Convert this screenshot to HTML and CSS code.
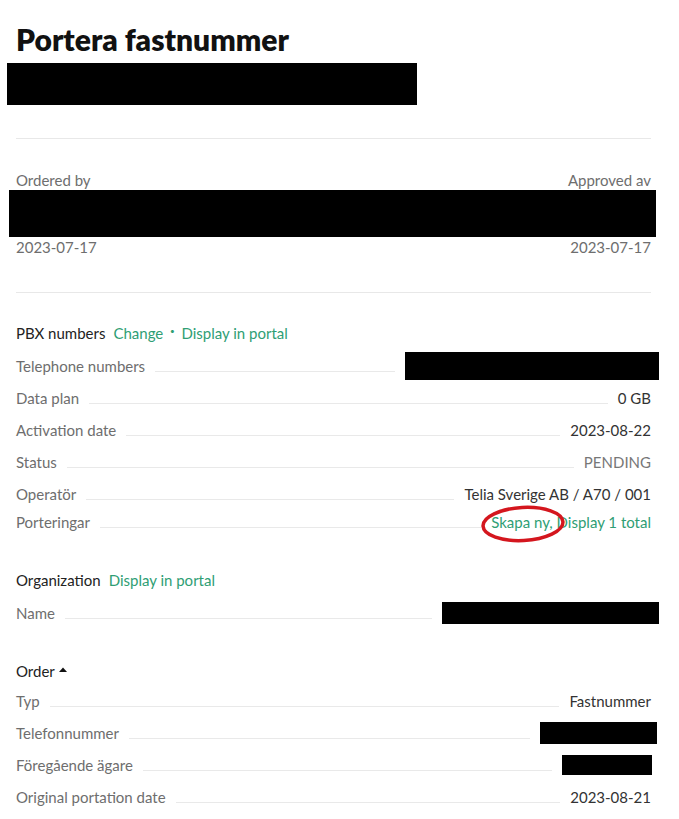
FILE: index.html
```html
<!DOCTYPE html>
<html lang="sv">
<head>
<meta charset="utf-8">
<title>Portera fastnummer</title>
<link rel="stylesheet" href="styles.css">
</head>
<body>
<div class="page">
  <h1 class="title">Portera fastnummer</h1>
  <div class="redact redact-sub"></div>
  <hr class="sep">
  <div class="meta">
    <div class="meta-row"><span>Ordered by</span><span>Approved av</span></div>
    <div class="redact redact-people"></div>
    <div class="meta-row"><span>2023-07-17</span><span>2023-07-17</span></div>
  </div>
  <hr class="sep">

  <section class="group group-pbx">
    <div class="group-head">PBX numbers <span class="links"><a class="link" href="#">Change</a><span class="dot">·</span><a class="link" href="#">Display in portal</a></span></div>
    <div class="row"><span class="label">Telephone numbers</span><span class="leader"></span><span class="value"><span class="redact redact-tel"></span></span></div>
    <div class="row"><span class="label">Data plan</span><span class="leader"></span><span class="value">0 GB</span></div>
    <div class="row"><span class="label">Activation date</span><span class="leader"></span><span class="value">2023-08-22</span></div>
    <div class="row"><span class="label">Status</span><span class="leader"></span><span class="value value-muted">PENDING</span></div>
    <div class="row"><span class="label">Operatör</span><span class="leader"></span><span class="value">Telia Sverige AB / A70 / 001</span></div>
    <div class="row row-last"><span class="label">Porteringar</span><span class="leader"></span><span class="value"><span class="annot"><a class="link" href="#">Skapa ny</a><span class="link">,</span><svg class="circle" viewBox="0 0 86 40" aria-hidden="true"><ellipse cx="43" cy="20" rx="40" ry="16.5" transform="rotate(-3 43 20)" fill="none" stroke="#d4161e" stroke-width="3.5"/></svg></span> <a class="link" href="#">Display 1 total</a></span></div>
  </section>

  <section class="group group-org">
    <div class="group-head">Organization <span class="links"><a class="link" href="#">Display in portal</a></span></div>
    <div class="row"><span class="label">Name</span><span class="leader"></span><span class="value"><span class="redact redact-name"></span></span></div>
  </section>

  <section class="group group-order">
    <div class="group-head group-head-tight">Order <svg class="caret" viewBox="0 0 8 5" aria-hidden="true"><path d="M0 5 L4 0.5 L8 5 Z" fill="#111"/></svg></div>
    <div class="row"><span class="label">Typ</span><span class="leader"></span><span class="value">Fastnummer</span></div>
    <div class="row"><span class="label">Telefonnummer</span><span class="leader"></span><span class="value"><span class="redact redact-phone"></span></span></div>
    <div class="row"><span class="label">Föregående ägare</span><span class="leader"></span><span class="value"><span class="redact redact-owner"></span></span></div>
    <div class="row"><span class="label">Original portation date</span><span class="leader"></span><span class="value">2023-08-21</span></div>
  </section>
</div>
</body>
</html>
```

FILE: styles.css
```css
* { box-sizing: border-box; }

body {
  margin: 0;
  background: #ffffff;
  font-family: Lato, "Noto Sans", sans-serif;
  font-size: 15px;
  line-height: 20px;
  color: #333333;
}

.page {
  padding: 22px 28px 0 16px;
}

.title {
  margin: 0;
  font-size: 30px;
  line-height: 34px;
  font-weight: 800;
  color: #111111;
}

.redact {
  display: block;
  background: #000000;
}

.redact-sub {
  margin: 7px 0 33px -9px;
  width: 410px;
  height: 42px;
}

.sep {
  border: 0;
  border-top: 1px solid #e8e8e8;
  height: 0;
  margin: 0;
}

.meta {
  padding: 31px 0 35px;
  color: #6e6e6e;
}

.meta-row {
  display: flex;
  justify-content: space-between;
}

.redact-people {
  margin: 0 -5px 0 -7px;
  height: 47px;
}

.group-pbx { margin-top: 26px; }
.group-org { margin-top: 32px; }
.group-order { margin-top: 28px; }

.group-head {
  display: flex;
  align-items: center;
  line-height: 28px;
  margin-bottom: 3px;
  color: #222222;
}

.group-head-tight { margin-bottom: 0; }

.links {
  margin-left: 8px;
  display: inline-flex;
  align-items: center;
}

.link {
  color: #2f9e74;
  text-decoration: none;
}

.dot {
  color: #2f9e74;
  margin: 0 7px;
  font-weight: 900;
  line-height: 10px;
  margin-top: -7px;
}

.caret {
  width: 8px;
  height: 5px;
  margin-left: 4px;
  margin-top: -3px;
}

.row {
  display: flex;
  align-items: center;
  height: 32px;
}

.row-last { height: 24px; }

.label {
  color: #6e6e6e;
  white-space: nowrap;
}

.leader {
  flex: 1;
  height: 1px;
  background: #e9e9e9;
  margin: 10px 10px 0;
}

.value {
  display: block;
  white-space: nowrap;
  color: #333333;
}

.value-muted { color: #777777; }

.annot {
  position: relative;
}

.circle {
  position: absolute;
  left: -11px;
  top: -9px;
  width: 86px;
  height: 40px;
  overflow: visible;
}

.redact-tel {
  width: 254px;
  height: 28px;
  margin-right: -8px;
}

.redact-name {
  width: 217px;
  height: 22px;
  margin-right: -8px;
}

.redact-phone {
  width: 117px;
  height: 22px;
  margin-right: -6px;
}

.redact-owner {
  width: 90px;
  height: 20px;
  margin-right: -1px;
}
```
